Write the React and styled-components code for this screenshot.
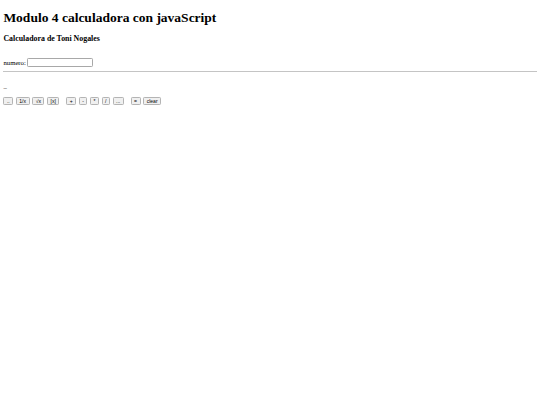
import React from "react";
import styled, { createGlobalStyle } from "styled-components";

const Global = createGlobalStyle`
  html, body { margin: 0; padding: 0; background: #fff; }
  body { font-family: "Liberation Serif", "Times New Roman", serif; color: #000; }
`;

/* The reference is a 1280px-wide page shown at 540px: scale everything by 540/1280. */
const Page = styled.div`
  zoom: 0.421875;
  padding: 23px 8px 8px;
  font-size: 16px;
`;

const Title = styled.h1`
  font-size: 32px;
  font-weight: bold;
  margin: 0;
  line-height: 37px;
`;

const Subtitle = styled.h3`
  font-size: 18.72px;
  font-weight: bold;
  margin: 21px 0 0;
  line-height: 22px;
`;

const Field = styled.div`
  margin-top: 35px;
  display: flex;
  align-items: center;
  gap: 3px;
  line-height: 22px;
`;

const Input = styled.input`
  box-sizing: border-box;
  width: 157px;
  height: 21px;
  margin: 0;
  padding: 1px 2px;
  border: 2px solid #a8a8a8;
  border-radius: 3px;
  background: #fff;
  font-family: "Liberation Sans", Arial, sans-serif;
  font-size: 13.33px;
`;

const Rule = styled.hr`
  margin: 8px 0 0;
  border: none;
  border-top: 2px solid #c4c4c4;
  height: 0;
`;

const Result = styled.p`
  margin: 24px 0 0;
  line-height: 18px;
  font-size: 16px;
`;

const Buttons = styled.div`
  margin-top: 18px;
  display: flex;
  align-items: center;
  gap: 6px;
`;

const Button = styled.button`
  box-sizing: border-box;
  height: 19px;
  padding: 1px 6px;
  margin: 0 0 0 ${(p) => (p.$sep ? "10px" : "0")};
  border: 2px solid #b4b4b4;
  border-radius: 3px;
  background: #f0f0f0;
  font-family: "Liberation Sans", Arial, sans-serif;
  font-size: 12px;
  line-height: 13px;
  color: #000;
`;

const items = [
  ["..", false], ["1/x", false], ["√x", false], ["[x]", false],
  ["+", true], ["-", false], ["*", false], ["/", false], ["...", false],
  ["=", true], ["clear", false],
];

export default function App() {
  return (
    <>
      <Global />
      <Page>
        <Title>Modulo 4 calculadora con javaScript</Title>
        <Subtitle>Calculadora de Toni Nogales</Subtitle>
        <Field>numero:<Input type="text" /></Field>
        <Rule />
        <Result>_</Result>
        <Buttons>
          {items.map(([t, sep], i) => (
            <Button key={i} $sep={sep}>{t}</Button>
          ))}
        </Buttons>
      </Page>
    </>
  );
}
